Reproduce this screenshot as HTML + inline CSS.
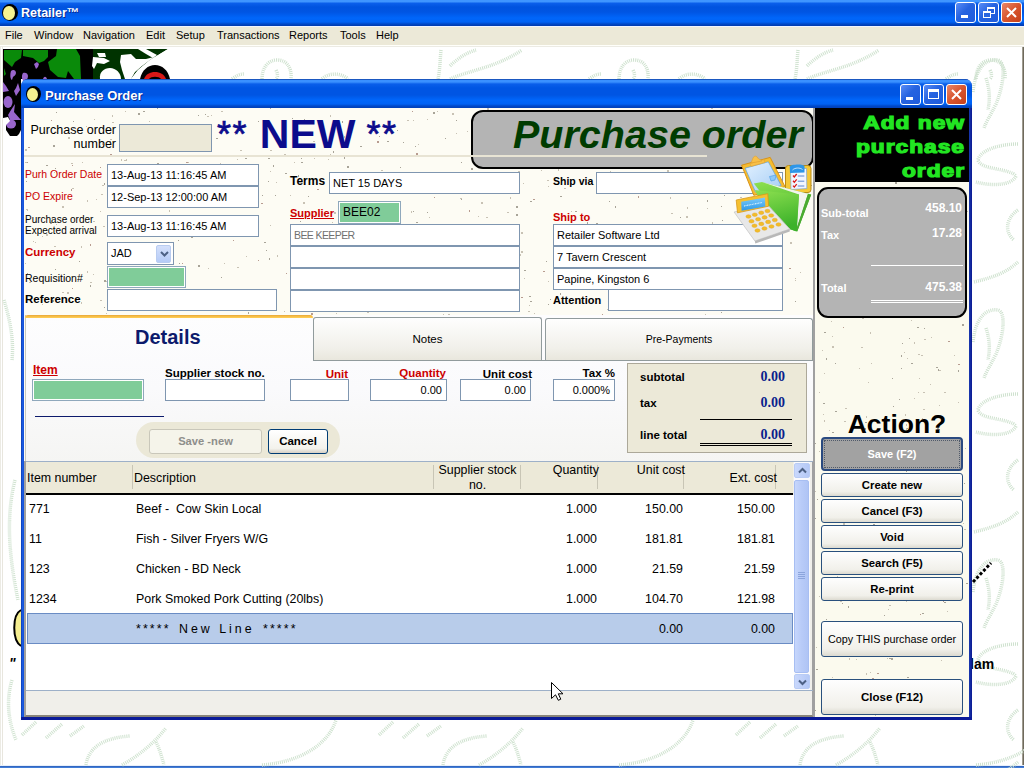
<!DOCTYPE html>
<html><head><meta charset="utf-8">
<style>
*{margin:0;padding:0;box-sizing:border-box}
html,body{width:1024px;height:768px;overflow:hidden;background:#fff}
body{position:relative;font-family:"Liberation Sans",sans-serif;font-size:12px;color:#000}
.a{position:absolute}
.tb{position:absolute;background:#fff;border:1px solid #7F96B0}
.lbl{position:absolute;white-space:nowrap;line-height:14px}
.b{font-weight:bold}
.red{color:#CC0000}
.xpbtn{position:absolute;width:21px;height:21px;border:1px solid #fff;border-radius:3px;background:linear-gradient(135deg,#5A8DF7 0%,#2663E0 45%,#1E5BDC 100%)}
.xpbtn.close{background:linear-gradient(135deg,#E8876A 0%,#D8552E 50%,#C5401A 100%)}
.abtn{position:absolute;left:821px;width:142px;border:1px solid #29507D;border-radius:3px;background:linear-gradient(#FEFEFE,#F1F0EA 80%,#DCDAD0);text-align:center;font-weight:bold;font-size:11.3px}
.row{position:absolute;left:27px;width:766px;height:30px}
.cell{position:absolute;top:8px;white-space:nowrap;line-height:14px}
.r{text-align:right}
</style></head><body>

<!-- Main window title -->
<div class="a" style="left:0;top:0;width:1024px;height:26px;background:linear-gradient(#3F95FF 0px,#3F95FF 1.5px,#0A5EEA 3.5px,#0053DF 7px,#0055E3 12px,#0066FA 18px,#0062F4 22px,#0048C8 24px,#003AAE 26px)"></div><div class="a" style="left:0;top:26px;width:1024px;height:1px;background:#F0F4FF"></div>
<div class="a" style="left:2px;top:4px;width:16px;height:17px;border-radius:50%;background:#000"></div><div class="a" style="left:3px;top:5.5px;width:11.5px;height:14px;border-radius:50%;background:#F5F290"></div>
<div class="lbl b" style="left:21px;top:5px;color:#fff;font-size:12.5px;line-height:16px;text-shadow:1px 1px 0 #0A2A90">Retailer™</div>
<div class="xpbtn" style="left:955px;top:2px"><div class="a" style="left:5px;top:12px;width:7px;height:3px;background:#fff"></div></div>
<div class="xpbtn" style="left:978px;top:2px"><div class="a" style="left:8px;top:4px;width:8px;height:7px;border:2px solid #fff;border-width:2px 1px 1px 1px"></div><div class="a" style="left:4px;top:8px;width:8px;height:7px;border:2px solid #fff;border-width:2px 1px 1px 1px;background:#2A66E0"></div></div>
<div class="xpbtn close" style="left:1001px;top:2px"><svg class="a" style="left:4px;top:4px" width="11" height="11"><path d="M1 1L10 10M10 1L1 10" stroke="#fff" stroke-width="2"/></svg></div>

<!-- Menu bar -->
<div class="a" style="left:0;top:27px;width:1024px;height:18px;background:#ECE9D8"></div>
<div class="a" style="left:0;top:45px;width:1024px;height:1px;background:#FFFFFA"></div><div class="a" style="left:0;top:46px;width:1024px;height:1px;background:#ECEBE4"></div>
<div class="lbl" style="left:5px;top:28px;font-size:11px">File</div>
<div class="lbl" style="left:34px;top:28px;font-size:11px">Window</div>
<div class="lbl" style="left:83px;top:28px;font-size:11px">Navigation</div>
<div class="lbl" style="left:146px;top:28px;font-size:11px">Edit</div>
<div class="lbl" style="left:176px;top:28px;font-size:11px">Setup</div>
<div class="lbl" style="left:217px;top:28px;font-size:11px">Transactions</div>
<div class="lbl" style="left:289px;top:28px;font-size:11px">Reports</div>
<div class="lbl" style="left:340px;top:28px;font-size:11px">Tools</div>
<div class="lbl" style="left:376px;top:28px;font-size:11px">Help</div>

<!-- MDI client border -->
<div class="a" style="left:0;top:46px;width:1px;height:720px;background:#ECEBE4"></div><div class="a" style="left:2px;top:47px;width:1px;height:720px;background:#E8E6DE"></div>
<div class="a" style="left:1022px;top:47px;width:1px;height:720px;background:#A09C90"></div><div class="a" style="left:1023px;top:47px;width:1px;height:720px;background:#6F6A5C"></div>
<div class="a" style="left:0;top:765px;width:1024px;height:1px;background:#E8F0FA"></div><div class="a" style="left:0;top:766px;width:1024px;height:2px;background:linear-gradient(#2A5CB8,#4A88E0)"></div>


<!-- ===== DESKTOP DECOR ===== -->
<svg class="a" style="left:0;top:48px" width="1024" height="720" viewBox="0 48 1024 720">
 <g fill="none" stroke="#CFE2CF" stroke-width="3.5" stroke-dasharray="1 1"><path d="M232 79 C236 76 240 74 244 74"/><path d="M262 79 C262 68 268 60 277 60 C287 60 292 68 291 79"/><path d="M276 70 C278 74 278 77 276 79"/><path d="M322 79 C328 73 340 72 348 79"/><path d="M441 50 C440 60 440 70 438 79"/><path d="M450 66 C458 58 468 52 476 50"/><path d="M450 79 C470 70 495 68 522 50"/><g transform="translate(357 0)"><path d="M232 79 C236 76 240 74 244 74"/><path d="M262 79 C262 68 268 60 277 60 C287 60 292 68 291 79"/><path d="M276 70 C278 74 278 77 276 79"/><path d="M322 79 C328 73 340 72 348 79"/><path d="M441 50 C440 60 440 70 438 79"/><path d="M450 66 C458 58 468 52 476 50"/><path d="M450 79 C470 70 495 68 522 50"/></g><g transform="translate(714 0)"><path d="M232 79 C236 76 240 74 244 74"/><path d="M262 79 C262 68 268 60 277 60 C287 60 292 68 291 79"/><path d="M276 70 C278 74 278 77 276 79"/><path d="M322 79 C328 73 340 72 348 79"/><path d="M441 50 C440 60 440 70 438 79"/><path d="M450 66 C458 58 468 52 476 50"/><path d="M450 79 C470 70 495 68 522 50"/></g><path d="M22 735 L36 722 M46 738 L62 724 M70 736 L84 726"/><path d="M86 765 C88 750 100 738 130 736"/><path d="M122 765 C140 755 155 742 166 728"/><path d="M156 742 C160 750 162 758 164 765"/><path d="M262 765 C300 762 328 745 336 720"/><g transform="translate(357 0)"><path d="M22 735 L36 722 M46 738 L62 724 M70 736 L84 726"/><path d="M86 765 C88 750 100 738 130 736"/><path d="M122 765 C140 755 155 742 166 728"/><path d="M156 742 C160 750 162 758 164 765"/><path d="M262 765 C300 762 328 745 336 720"/></g><g transform="translate(714 0)"><path d="M22 735 L36 722 M46 738 L62 724 M70 736 L84 726"/><path d="M86 765 C88 750 100 738 130 736"/><path d="M122 765 C140 755 155 742 166 728"/><path d="M156 742 C160 750 162 758 164 765"/><path d="M262 765 C300 762 328 745 336 720"/></g><path d="M973 92 C975 70 985 58 998 60 C1006 62 1004 85 996 104 C990 116 986 122 984 128"/><path d="M986 78 C990 90 990 100 988 110"/><path d="M1018 144 C1000 144 980 150 978 160 C980 170 1010 168 1016 176 C1012 186 990 186 976 182"/><path d="M1018 210 C1006 218 1004 232 1014 240"/><path d="M974 282 C990 278 1005 274 1018 262"/><g transform="translate(0 250)"><path d="M973 92 C975 70 985 58 998 60 C1006 62 1004 85 996 104 C990 116 986 122 984 128"/><path d="M986 78 C990 90 990 100 988 110"/><path d="M1018 144 C1000 144 980 150 978 160 C980 170 1010 168 1016 176 C1012 186 990 186 976 182"/><path d="M1018 210 C1006 218 1004 232 1014 240"/><path d="M974 282 C990 278 1005 274 1018 262"/></g><g transform="translate(0 500)"><path d="M973 92 C975 70 985 58 998 60 C1006 62 1004 85 996 104 C990 116 986 122 984 128"/><path d="M986 78 C990 90 990 100 988 110"/><path d="M1018 144 C1000 144 980 150 978 160 C980 170 1010 168 1016 176 C1012 186 990 186 976 182"/><path d="M1018 210 C1006 218 1004 232 1014 240"/><path d="M974 282 C990 278 1005 274 1018 262"/></g><path d="M15 480 C5 520 10 560 18 600"/><path d="M12 680 C6 700 8 720 16 740"/><path d="M4 300 C10 320 14 340 12 360"/></g>
 <!-- vine picture -->
 <rect x="3" y="49" width="91" height="30" fill="#000"/>
 <rect x="3" y="79" width="18" height="57" fill="#000"/>
 <path d="M4 50 H22 L21 58 L15 62 L12 67 L4 60 Z" fill="#0A8A0A"/>
 <path d="M23 50 H48 L48 57 L44 61 L39 63 L33 58 L23 56 Z" fill="#0A8A0A"/>
 <path d="M57 49 H76 L80 56 L81 79 H74 L68 71 L66 78 L58 77 L50 70 L48 62 L56 56 Z" fill="#0A8A0A"/>
 <path d="M4 68 L6 74 L4 76 Z" fill="#0A8A0A"/>
 <path d="M93 49 H168 L150 60 L138 70 L131 79 H93 Z" fill="#003300"/>
 <path d="M168 49 H170 V79 H131 L138 70 L150 60 Z" fill="#fff"/>
 <path d="M121 55 L131 54 L136 59 L146 59 L154 57 L142 66 L135 72 L131 79 L125 79 L122 70 L120 62 Z" fill="#fff"/>
 <path d="M138 49 L146 49 L157 55 L153 58 L146 54 Z" fill="#fff"/>
 <path d="M97 53 L105 53 L106 57 L99 57 Z" fill="#fff"/>
 <path d="M93 57 L104 58 L110 61 L104 64 L97 63 L94 69 L92 66 Z" fill="#fff"/>
 <path d="M100 79 C99 72 104 68 110 68 C116 68 121 73 121 79 Z" fill="#fff"/>
 <path d="M140 79 C142 70 148 65 155 65 C162 65 168 70 170 79 Z" fill="#000"/>
 <path d="M144 79 C146 74 150 72 155 72 C160 72 164 74 166 79 Z" fill="#D81818"/>
 <path d="M149 79 C151 76 159 76 161 79 Z" fill="#000"/>
 <path d="M34 64 l3-2 l2 2 l-1 3 l-2 2 z" fill="#9966CC"/>
 <path d="M11 71 c2-2 5-1 5 2 c0 2-2 3-3 4 l-1 3 c-2-1-2-6-1-9z" fill="#9966CC"/>
 <path d="M23 73 c2-1 5 0 5 3 c0 3-2 5-4 6 c-2-2-3-6-1-9z" fill="#9966CC"/>
 <path d="M43 79 c1-3 3-3 4 0 z" fill="#9966CC"/>
 <path d="M3 82 L6 86 L9 91 L3 92 Z" fill="#9966CC"/>
 <path d="M18 83 L20 90 L16 96 L14 91 L16 88 Z" fill="#9966CC"/>
 <ellipse cx="8" cy="102" rx="4.5" ry="6" fill="#9966CC"/>
 <path d="M15 104 L14 112 L21 120 L10 120 L8 115 L11 110 Z" fill="#9966CC"/>
 <ellipse cx="11" cy="124" rx="5" ry="4.5" fill="#9966CC"/>
 <path d="M3 118 L8 117 L10 121 L6 125 L6 130 L10 136 L3 136 Z" fill="#fff"/>
 <path d="M19 134 L21 130 L21 136 L17 136 Z" fill="#fff"/>
 <!-- left bottom -->
 <path d="M21 610 C12 615 12 640 21 646" fill="#F5EE90" stroke="#000" stroke-width="2"/>
 <text x="9" y="668" font-family="Liberation Sans" font-style="italic" font-size="14" font-weight="bold">"</text>
 <!-- right -->
 <path d="M973 582 L991 563" stroke="#000" stroke-width="3" stroke-dasharray="3 2"/>
 <text x="970" y="669" font-family="Liberation Sans" font-weight="bold" font-size="14">lam</text>
</svg>



<!-- PO window frame -->
<div class="a" style="left:21px;top:79px;width:951px;height:641px;border-radius:7px 7px 0 0;background:#0A3AB8"></div>
<div class="a" style="left:21px;top:100px;width:3px;height:620px;background:linear-gradient(90deg,#0A3AB0,#1A5AE0 50%,#1550D8)"></div>
<div class="a" style="left:969px;top:100px;width:3px;height:620px;background:linear-gradient(90deg,#1A3AB0,#0A1890)"></div>
<div class="a" style="left:21px;top:717px;width:951px;height:3px;background:#0A1A98"></div>
<div class="a" style="left:21px;top:79px;width:951px;height:29px;border-radius:7px 7px 0 0;background:linear-gradient(#0A3AA0 0px,#3A90FF 1.5px,#3A90FF 3px,#0A5EEA 5px,#0055E3 9px,#0055E3 16px,#0066FA 21px,#0062F4 25px,#0048C8 27px,#0040B8 29px)"></div>
<div class="a" style="left:25.5px;top:86px;width:15px;height:16px;border-radius:50%;background:#000"></div><div class="a" style="left:26.5px;top:87.5px;width:11px;height:13px;border-radius:50%;background:#F5F290"></div>
<div class="lbl b" style="left:45px;top:88px;color:#fff;font-size:13px;line-height:15px;text-shadow:1px 1px 0 #0A2A90">Purchase Order</div>
<div class="xpbtn" style="left:900px;top:84px"><div class="a" style="left:5px;top:12px;width:7px;height:3px;background:#fff"></div></div>
<div class="xpbtn" style="left:923px;top:84px"><div class="a" style="left:4px;top:4px;width:11px;height:10px;border:1px solid #fff;border-top-width:3px"></div></div>
<div class="xpbtn close" style="left:946px;top:84px"><svg class="a" style="left:4px;top:4px" width="11" height="11"><path d="M1 1L10 10M10 1L1 10" stroke="#fff" stroke-width="2"/></svg></div>

<!-- client area -->
<div class="a" style="left:24px;top:108px;width:945px;height:609px;background:#FDFCF4"></div>
<div class="a" style="left:815px;top:182px;width:154px;height:535px;background:#FBFAEE"></div>
<!--SPECK--><svg class="a" style="left:0;top:0" width="1024" height="768"><path fill="#A8A498" d="M446 183h2v1h-2zM53 197h1v1h-1zM358 279h1v1h-1zM137 132h1v2h-1zM456 120h1v1h-1zM560 196h2v1h-2zM353 264h1v1h-1zM398 245h2v1h-2zM328 246h1v1h-1zM156 132h1v2h-1zM670 286h1v1h-1zM163 156h1v1h-1zM488 162h1v1h-1zM333 190h2v1h-2zM73 121h1v1h-1zM292 118h1v1h-1zM104 183h1v2h-1zM508 138h1v1h-1zM391 208h1v1h-1zM705 252h1v1h-1zM46 165h2v1h-2zM777 183h1v1h-1zM615 206h1v2h-1zM300 221h1v1h-1zM222 168h2v1h-2zM228 194h2v2h-2zM27 273h1v1h-1zM596 223h2v1h-2zM462 270h2v1h-2zM119 199h1v1h-1zM720 308h2v2h-2zM461 199h1v1h-1zM516 214h2v2h-2zM646 309h1v1h-1zM55 269h1v1h-1zM90 285h1v2h-1zM110 141h1v1h-1zM343 179h1v1h-1zM79 261h1v1h-1zM246 158h1v1h-1zM148 200h2v2h-2zM791 221h2v2h-2zM268 181h1v1h-1zM398 212h2v1h-2zM27 162h1v1h-1zM56 112h1v1h-1zM603 276h2v1h-2zM205 114h1v1h-1zM531 124h1v1h-1zM795 301h1v1h-1zM189 303h2v1h-2zM135 179h1v2h-1zM308 196h1v1h-1zM104 280h2v2h-2zM617 241h1v1h-1zM156 141h2v2h-2zM379 136h1v1h-1zM293 126h1v1h-1zM384 222h1v2h-1zM721 206h1v1h-1zM781 253h1v1h-1zM550 299h1v1h-1zM198 265h2v2h-2zM415 146h1v1h-1zM548 304h1v1h-1zM192 309h1v1h-1zM157 108h1v1h-1zM779 235h2v1h-2zM273 165h1v2h-1zM179 263h1v1h-1zM50 222h2v2h-2zM721 312h1v1h-1zM606 149h1v1h-1zM55 168h1v1h-1zM707 200h1v2h-1zM195 184h1v1h-1zM528 126h2v1h-2zM347 166h2v2h-2zM598 150h2v2h-2zM387 141h2v1h-2zM529 296h2v1h-2zM316 212h1v1h-1zM435 299h1v1h-1zM658 308h1v1h-1zM397 130h1v1h-1zM601 276h2v2h-2zM646 300h1v1h-1zM53 145h2v2h-2zM560 293h1v2h-1zM270 108h1v1h-1zM26 181h1v1h-1zM516 206h2v2h-2zM216 138h2v1h-2zM220 295h2v1h-2zM344 157h1v2h-1zM665 144h1v1h-1zM609 201h1v1h-1zM718 111h1v1h-1zM718 176h2v2h-2zM191 236h2v2h-2zM138 113h2v2h-2zM296 137h1v1h-1zM670 292h1v2h-1zM745 303h1v1h-1zM275 195h1v1h-1zM229 303h1v1h-1zM575 211h2v1h-2zM323 290h1v1h-1zM298 175h1v2h-1zM546 261h1v1h-1zM634 227h1v1h-1zM722 157h1v1h-1zM578 282h1v1h-1zM104 307h1v1h-1zM178 240h1v1h-1zM530 201h2v1h-2zM410 309h2v1h-2zM347 304h2v1h-2zM333 265h2v2h-2zM304 119h1v1h-1zM301 162h2v1h-2zM765 217h1v2h-1zM333 151h1v2h-1zM360 146h2v1h-2zM245 158h1v1h-1zM756 284h1v2h-1zM738 270h1v2h-1zM523 111h2v2h-2zM541 159h1v1h-1zM737 271h1v2h-1zM645 281h2v1h-2zM461 162h1v1h-1zM438 267h1v1h-1zM285 173h2v1h-2zM524 270h2v1h-2zM722 220h1v1h-1zM625 128h1v1h-1zM262 195h1v1h-1zM530 301h2v1h-2zM748 200h1v1h-1zM143 111h2v1h-2zM119 308h1v2h-1zM602 146h1v2h-1zM269 258h1v2h-1zM370 248h1v2h-1zM471 168h2v2h-2zM578 279h2v1h-2zM667 291h1v2h-1zM400 229h1v1h-1zM341 215h1v1h-1zM810 185h2v1h-2zM433 112h2v2h-2zM670 307h1v1h-1zM182 145h1v1h-1zM118 306h2v1h-2zM198 115h1v1h-1zM107 175h1v1h-1zM403 142h1v1h-1zM52 300h2v2h-2zM707 291h1v1h-1zM519 137h1v1h-1zM587 222h1v2h-1zM234 193h1v1h-1zM686 177h1v1h-1zM274 294h2v2h-2zM400 167h1v1h-1zM660 178h1v1h-1zM680 217h1v1h-1zM664 228h1v1h-1zM712 163h1v2h-1zM787 154h1v1h-1zM221 277h1v1h-1zM575 148h2v1h-2zM710 256h1v1h-1zM413 211h1v1h-1zM636 178h1v1h-1zM667 283h2v1h-2zM779 301h1v1h-1zM365 212h1v1h-1zM264 242h2v1h-2zM778 214h1v1h-1zM445 138h1v1h-1zM255 192h1v1h-1zM473 242h2v1h-2zM268 158h2v1h-2zM326 229h1v1h-1zM248 312h1v2h-1zM169 170h2v1h-2zM360 296h1v1h-1zM442 276h1v1h-1zM724 195h1v1h-1zM427 212h1v1h-1zM266 250h1v1h-1zM416 222h2v1h-2zM507 274h1v1h-1zM157 163h2v2h-2zM370 236h1v1h-1zM758 284h1v2h-1zM414 304h1v1h-1zM590 153h1v2h-1zM406 272h1v1h-1zM342 121h1v2h-1zM301 158h1v1h-1zM146 254h1v1h-1zM321 306h2v2h-2zM163 284h2v1h-2zM258 121h1v1h-1zM123 256h1v1h-1zM128 165h2v1h-2zM520 145h2v2h-2zM603 255h1v1h-1zM151 149h1v1h-1zM682 268h1v1h-1zM697 233h1v1h-1zM111 271h2v2h-2zM613 279h1v1h-1zM922 613h2v1h-2zM958 370h1v2h-1zM898 588h2v1h-2zM824 332h2v1h-2zM883 242h1v1h-1zM870 271h1v1h-1zM966 583h2v1h-2zM964 483h1v1h-1zM914 316h1v1h-1zM890 449h1v1h-1zM882 700h1v1h-1zM953 269h1v1h-1zM901 368h1v1h-1zM832 643h1v1h-1zM849 488h2v1h-2zM933 212h1v1h-1zM817 499h1v1h-1zM919 623h1v1h-1zM832 193h1v2h-1zM843 478h2v1h-2zM937 200h1v2h-1zM826 358h1v2h-1zM905 205h1v1h-1zM885 709h1v1h-1zM917 327h2v1h-2zM958 546h1v2h-1zM899 399h1v1h-1zM902 343h1v1h-1zM854 194h1v1h-1zM956 295h2v1h-2zM823 403h2v1h-2zM865 231h1v1h-1zM895 685h1v1h-1zM819 253h2v1h-2zM937 428h2v2h-2zM831 574h2v1h-2zM876 644h2v1h-2zM849 316h1v1h-1zM860 713h2v1h-2zM929 622h1v1h-1zM889 658h2v1h-2zM860 195h2v2h-2zM816 669h2v1h-2zM964 199h1v2h-1zM880 238h2v2h-2zM863 652h1v1h-1zM835 411h2v1h-2zM856 276h1v1h-1zM907 677h2v1h-2zM872 310h1v1h-1zM863 701h2v1h-2zM849 509h2v2h-2zM838 316h1v1h-1zM845 487h1v1h-1zM924 328h1v1h-1zM871 538h1v1h-1zM952 587h2v1h-2zM932 593h1v1h-1zM826 619h1v1h-1zM930 483h2v1h-2zM923 440h2v1h-2zM815 710h1v1h-1zM893 406h1v1h-1zM901 355h1v2h-1zM918 543h1v1h-1zM878 534h2v2h-2zM919 264h2v1h-2zM821 629h1v1h-1zM873 524h2v1h-2zM906 471h1v1h-1zM865 422h2v1h-2zM842 603h1v1h-1zM906 428h2v1h-2zM829 528h2v1h-2zM840 685h1v2h-1zM948 438h1v1h-1zM832 432h2v1h-2zM892 378h1v1h-1zM846 250h1v2h-1zM891 658h2v2h-2zM850 583h1v1h-1zM867 257h1v1h-1zM929 522h2v1h-2zM944 602h2v1h-2zM853 630h1v1h-1zM815 443h1v1h-1zM909 338h1v1h-1zM833 547h1v2h-1zM895 182h2v2h-2zM884 615h1v1h-1zM870 704h1v2h-1zM936 367h2v1h-2zM862 210h1v1h-1zM962 696h1v1h-1zM959 287h1v1h-1zM962 324h2v2h-2zM855 312h2v1h-2zM938 369h1v2h-1zM835 363h1v1h-1zM876 488h1v2h-1zM935 630h2v1h-2zM856 295h1v1h-1zM815 518h1v1h-1zM821 624h1v1h-1zM911 363h2v1h-2zM848 606h1v2h-1zM938 469h1v2h-1z"/><path fill="#C8C2B4" d="M279 139h1v1h-1zM519 304h1v1h-1zM794 117h1v1h-1zM166 228h1v1h-1zM381 170h2v1h-2zM216 226h1v2h-1zM54 246h2v1h-2zM714 172h2v1h-2zM481 202h2v2h-2zM534 313h1v1h-1zM126 159h1v2h-1zM87 200h1v2h-1zM430 235h1v1h-1zM733 269h1v2h-1zM311 133h2v2h-2zM294 162h1v1h-1zM42 304h1v1h-1zM452 113h2v2h-2zM155 267h1v2h-1zM284 154h2v2h-2zM696 274h2v1h-2zM202 215h1v1h-1zM179 150h2v2h-2zM687 207h1v2h-1zM340 303h1v1h-1zM790 242h2v2h-2zM366 288h1v1h-1zM303 202h2v2h-2zM355 297h2v1h-2zM437 111h1v1h-1zM220 165h2v1h-2zM507 212h2v1h-2zM380 218h2v2h-2zM465 303h1v1h-1zM81 246h1v2h-1zM145 256h1v1h-1zM151 197h1v1h-1zM178 173h1v1h-1zM357 296h1v1h-1zM141 298h2v1h-2zM94 119h1v1h-1zM81 302h1v2h-1zM382 178h2v2h-2zM235 134h1v1h-1zM270 171h1v1h-1zM418 144h1v1h-1zM221 111h2v1h-2zM670 197h1v2h-1zM334 212h2v2h-2zM294 280h2v1h-2zM90 282h2v1h-2zM486 217h2v1h-2zM588 289h1v1h-1zM800 138h2v1h-2zM421 280h1v2h-1zM484 292h2v1h-2zM106 281h2v1h-2zM518 248h1v1h-1zM653 262h2v1h-2zM544 121h1v1h-1zM82 162h1v1h-1zM607 309h1v1h-1zM401 249h2v1h-2zM610 171h1v1h-1zM71 163h2v1h-2zM557 168h1v1h-1zM670 308h1v1h-1zM671 213h2v1h-2zM206 293h1v1h-1zM26 209h1v1h-1zM25 263h1v1h-1zM220 163h1v1h-1zM318 305h1v2h-1zM591 118h1v1h-1zM755 134h1v1h-1zM541 170h1v1h-1zM473 291h1v1h-1zM350 216h1v1h-1zM421 238h1v1h-1zM237 159h1v1h-1zM776 283h1v1h-1zM487 108h2v2h-2zM110 139h2v1h-2zM766 257h1v2h-1zM207 298h1v1h-1zM124 160h2v1h-2zM112 122h2v1h-2zM330 154h1v1h-1zM417 247h1v1h-1zM290 195h1v1h-1zM652 260h1v1h-1zM789 172h1v1h-1zM170 301h1v1h-1zM548 186h1v1h-1zM305 278h1v1h-1zM62 206h2v2h-2zM348 276h1v1h-1zM613 294h1v1h-1zM328 159h1v1h-1zM756 145h2v1h-2zM673 267h1v1h-1zM276 182h1v1h-1zM100 211h1v1h-1zM208 194h2v1h-2zM614 283h1v1h-1zM687 168h1v1h-1zM144 291h1v1h-1zM336 313h1v1h-1zM398 277h2v2h-2zM770 129h2v1h-2zM225 232h1v1h-1zM32 175h1v1h-1zM270 150h2v1h-2zM73 128h2v1h-2zM270 225h1v1h-1zM705 314h1v1h-1zM358 277h1v2h-1zM768 309h1v1h-1zM674 141h1v1h-1zM343 283h1v1h-1zM196 190h1v1h-1zM121 159h1v2h-1zM56 224h1v1h-1zM685 132h2v1h-2zM518 171h2v1h-2zM359 244h1v1h-1zM42 236h1v1h-1zM626 269h1v1h-1zM96 199h1v1h-1zM526 125h1v2h-1zM427 119h1v1h-1zM774 136h2v2h-2zM667 137h2v2h-2zM188 162h1v1h-1zM114 217h1v1h-1zM712 222h1v2h-1zM106 313h1v1h-1zM308 266h1v1h-1zM610 117h1v1h-1zM528 311h2v1h-2zM510 197h1v2h-1zM128 155h1v1h-1zM200 228h1v1h-1zM711 269h1v1h-1zM33 241h1v1h-1zM181 233h2v1h-2zM62 292h2v1h-2zM29 282h1v1h-1zM207 116h2v1h-2zM572 282h1v1h-1zM460 198h2v1h-2zM610 303h1v1h-1zM521 251h2v2h-2zM394 281h1v2h-1zM368 257h1v1h-1zM570 239h2v1h-2zM75 230h1v2h-1zM112 115h1v2h-1zM524 278h1v1h-1zM102 128h1v1h-1zM246 256h1v1h-1zM784 212h2v1h-2zM48 193h1v2h-1zM297 253h1v1h-1zM704 126h1v1h-1zM25 149h2v2h-2zM27 209h1v2h-1zM169 210h1v2h-1zM87 271h1v2h-1zM519 181h1v1h-1zM726 125h1v1h-1zM443 264h2v1h-2zM219 175h1v1h-1zM800 272h1v1h-1zM330 115h1v2h-1zM571 211h1v1h-1zM135 232h2v1h-2zM740 197h2v1h-2zM356 155h1v2h-1zM634 252h2v1h-2zM101 194h2v1h-2zM520 159h1v1h-1zM514 192h2v2h-2zM168 243h1v1h-1zM103 226h2v1h-2zM428 240h2v1h-2zM34 194h2v1h-2zM662 239h2v1h-2zM202 307h2v1h-2zM669 276h1v1h-1zM456 133h1v1h-1zM695 163h1v1h-1zM362 239h1v1h-1zM208 268h1v1h-1zM504 269h1v2h-1zM442 261h1v2h-1zM413 120h1v1h-1zM411 211h1v2h-1zM29 282h2v1h-2zM548 281h1v1h-1zM781 123h2v1h-2zM46 234h2v2h-2zM284 311h1v1h-1zM732 115h2v1h-2zM291 286h1v1h-1zM357 222h1v1h-1zM677 191h1v1h-1zM423 309h1v2h-1zM510 237h2v1h-2zM561 151h1v1h-1zM635 297h1v1h-1zM673 270h1v1h-1zM55 132h2v1h-2zM349 129h1v1h-1zM125 111h1v1h-1zM586 285h1v1h-1zM519 254h2v2h-2zM224 307h1v1h-1zM35 242h1v1h-1zM407 120h2v1h-2zM310 241h1v1h-1zM795 280h1v1h-1zM362 291h2v1h-2zM498 293h1v1h-1zM25 162h2v1h-2zM664 287h1v1h-1zM695 275h2v2h-2zM297 125h1v2h-1zM502 248h1v1h-1zM224 263h1v1h-1zM93 274h1v1h-1zM481 293h2v1h-2zM166 253h2v1h-2zM645 140h1v1h-1zM707 208h1v1h-1zM463 288h2v2h-2zM741 121h1v1h-1zM529 305h1v1h-1zM736 295h1v1h-1zM644 254h2v2h-2zM68 137h2v2h-2zM558 169h1v2h-1zM558 110h1v1h-1zM100 300h2v1h-2zM380 178h1v1h-1zM68 293h1v1h-1zM743 153h1v1h-1zM166 267h1v1h-1zM86 126h1v1h-1zM240 150h2v1h-2zM602 192h1v1h-1zM663 177h1v2h-1zM313 141h2v1h-2zM27 215h2v1h-2zM119 255h1v2h-1zM277 255h1v2h-1zM429 217h1v1h-1zM478 216h1v1h-1zM344 136h1v2h-1zM140 226h1v1h-1zM675 302h1v1h-1zM686 216h2v2h-2zM367 311h2v2h-2zM523 183h1v1h-1zM662 291h1v1h-1zM530 163h1v1h-1zM451 299h1v1h-1zM93 221h2v1h-2zM387 221h1v1h-1zM704 157h1v1h-1zM149 121h1v1h-1zM72 188h2v1h-2zM145 177h2v1h-2zM510 283h2v1h-2zM606 261h1v1h-1zM711 108h2v1h-2zM416 307h1v1h-1zM642 288h1v1h-1zM380 202h1v1h-1zM332 222h1v1h-1zM645 283h1v1h-1zM448 314h2v1h-2zM564 188h2v1h-2zM301 304h2v1h-2zM102 185h2v1h-2zM795 278h1v1h-1zM729 250h2v2h-2zM521 232h2v2h-2zM526 116h1v2h-1zM688 229h1v1h-1zM443 314h1v1h-1zM119 140h1v1h-1zM102 143h1v2h-1zM631 174h1v1h-1zM483 180h1v1h-1zM67 292h2v2h-2zM667 170h2v2h-2zM467 131h1v1h-1zM211 115h1v1h-1zM682 134h1v2h-1zM659 140h2v1h-2zM422 155h1v1h-1zM314 158h1v1h-1zM712 133h2v1h-2zM237 267h2v1h-2zM471 172h1v1h-1zM109 224h2v1h-2zM741 268h1v2h-1zM547 180h2v1h-2zM575 159h1v1h-1zM54 172h1v1h-1zM686 226h1v1h-1zM367 249h1v1h-1zM615 125h1v1h-1zM606 279h1v1h-1zM66 252h2v1h-2zM756 134h1v1h-1zM963 523h1v1h-1zM824 373h1v1h-1zM862 255h2v1h-2zM851 311h1v1h-1zM836 483h1v2h-1zM906 428h1v2h-1zM832 336h1v1h-1zM881 283h1v1h-1zM955 526h2v2h-2zM819 596h1v1h-1zM843 523h2v2h-2zM840 601h2v1h-2zM864 280h1v1h-1zM871 476h1v2h-1zM851 204h2v1h-2zM903 224h1v1h-1zM882 284h1v1h-1zM943 639h1v1h-1zM858 535h1v1h-1zM866 416h1v2h-1zM939 214h2v1h-2zM914 342h1v2h-1zM819 283h1v1h-1zM828 535h2v1h-2zM878 465h1v1h-1zM896 316h2v1h-2zM905 224h1v1h-1zM882 643h2v1h-2zM830 626h1v1h-1zM961 483h1v1h-1zM923 409h2v1h-2zM840 580h1v2h-1zM927 689h1v1h-1zM907 235h1v2h-1zM832 677h1v1h-1zM844 421h2v1h-2zM873 259h2v1h-2zM867 262h1v2h-1zM918 392h1v1h-1zM944 392h2v1h-2zM886 490h1v1h-1zM815 491h1v1h-1zM855 486h2v2h-2zM966 200h1v2h-1zM948 596h2v1h-2zM870 332h1v2h-1zM928 454h1v1h-1zM864 710h1v1h-1zM852 307h1v1h-1zM816 647h1v1h-1zM861 347h2v1h-2zM827 277h2v2h-2zM869 596h1v2h-1zM922 298h1v1h-1zM907 644h1v1h-1zM927 697h1v1h-1zM938 650h1v1h-1zM843 469h2v1h-2zM914 398h1v1h-1zM866 446h1v1h-1zM966 211h2v1h-2zM932 230h1v1h-1zM897 496h2v1h-2zM907 358h1v1h-1zM923 590h1v1h-1zM933 704h1v1h-1zM887 532h1v1h-1zM966 304h1v1h-1zM837 276h2v2h-2zM839 197h1v1h-1zM965 448h1v1h-1zM850 290h2v1h-2zM838 643h1v1h-1zM906 424h1v2h-1zM847 654h1v2h-1zM947 279h2v2h-2zM829 272h1v1h-1zM866 673h1v2h-1zM920 202h1v1h-1zM837 576h1v1h-1zM847 699h2v1h-2zM821 454h2v1h-2zM870 187h2v1h-2zM898 475h2v2h-2zM948 566h1v1h-1zM879 702h1v1h-1zM921 355h2v1h-2zM945 454h2v2h-2zM850 518h1v1h-1zM923 392h2v1h-2zM918 354h2v1h-2zM887 568h1v1h-1zM895 464h1v1h-1zM841 621h2v1h-2zM941 660h1v1h-1zM873 627h1v1h-1zM937 460h1v1h-1zM875 715h1v1h-1zM888 609h1v1h-1zM919 378h1v1h-1zM871 363h1v1h-1zM942 230h1v2h-1zM845 408h2v1h-2zM871 205h1v1h-1zM924 339h2v1h-2zM939 370h2v1h-2zM930 384h1v1h-1zM885 429h1v1h-1zM887 658h1v1h-1zM893 623h2v1h-2zM876 203h2v1h-2zM948 259h2v1h-2zM862 318h2v1h-2zM947 611h1v1h-1zM845 209h1v1h-1zM886 443h1v1h-1zM822 350h1v1h-1zM859 562h2v1h-2zM884 682h1v2h-1zM823 414h1v1h-1zM946 220h1v1h-1zM956 482h1v1h-1zM830 232h2v2h-2zM904 352h1v1h-1zM954 355h1v1h-1zM937 706h1v1h-1zM829 430h1v1h-1zM918 243h1v1h-1zM859 368h1v1h-1zM957 231h1v2h-1zM856 659h1v1h-1zM956 199h2v2h-2zM867 687h1v1h-1zM900 233h1v2h-1zM868 382h1v1h-1zM949 244h2v1h-2zM889 605h2v1h-2zM819 392h1v1h-1zM951 227h1v1h-1zM906 601h1v1h-1zM909 552h1v1h-1zM958 402h1v1h-1zM852 574h1v1h-1zM888 448h2v2h-2zM929 254h2v2h-2zM953 580h1v2h-1zM905 414h1v2h-1zM885 308h2v2h-2zM919 562h1v2h-1zM877 228h1v2h-1zM866 500h1v2h-1zM939 405h1v1h-1zM866 296h1v2h-1zM922 418h1v2h-1zM849 658h1v2h-1zM966 283h1v1h-1zM830 477h2v1h-2zM826 515h2v2h-2zM870 535h1v1h-1zM919 480h1v2h-1zM951 571h1v1h-1zM837 496h1v1h-1zM875 581h1v1h-1zM931 337h1v1h-1zM964 529h2v1h-2zM873 697h2v1h-2zM857 268h1v2h-1zM949 268h1v1h-1zM831 321h1v1h-1zM883 629h1v2h-1zM863 263h1v1h-1zM900 540h1v1h-1zM870 672h1v1h-1zM911 320h1v1h-1zM941 485h2v2h-2zM930 544h1v2h-1zM832 346h2v2h-2zM911 552h1v1h-1zM958 579h1v1h-1zM896 460h2v2h-2zM891 637h2v1h-2zM928 621h1v2h-1zM835 558h2v1h-2zM857 218h1v2h-1zM918 703h1v1h-1zM922 220h1v1h-1zM824 420h1v2h-1zM819 451h1v1h-1z"/><path fill="#B89C90" d="M599 167h1v1h-1zM307 291h1v1h-1zM315 225h2v1h-2zM778 200h2v2h-2zM90 244h1v2h-1zM286 273h1v1h-1zM124 139h1v2h-1zM139 279h2v1h-2zM467 265h1v1h-1zM575 289h1v1h-1zM338 208h1v2h-1zM173 206h1v1h-1zM58 280h2v1h-2zM391 132h1v1h-1zM135 216h1v1h-1zM754 255h1v1h-1zM317 189h2v1h-2zM521 297h2v1h-2zM258 260h1v1h-1zM416 153h2v2h-2zM72 165h1v1h-1zM49 254h1v1h-1zM675 285h1v1h-1zM261 203h2v1h-2zM71 189h1v2h-1zM602 314h1v1h-1zM777 133h1v1h-1zM176 183h1v1h-1zM51 120h1v1h-1zM747 239h1v1h-1zM208 206h2v2h-2zM661 243h1v1h-1zM791 228h1v1h-1zM754 188h2v1h-2zM412 306h1v1h-1zM620 140h1v1h-1zM653 162h2v1h-2zM533 199h2v1h-2zM33 222h1v1h-1zM233 240h1v1h-1zM186 162h2v1h-2zM282 147h2v1h-2zM150 269h2v1h-2zM28 147h2v1h-2zM543 271h2v1h-2zM491 302h1v1h-1zM328 270h1v2h-1zM182 263h1v1h-1zM638 196h1v2h-1zM377 141h2v2h-2zM311 313h2v2h-2zM100 167h1v1h-1zM597 168h1v1h-1zM412 111h1v1h-1zM72 288h1v1h-1zM789 268h2v1h-2zM434 197h1v1h-1zM110 154h2v1h-2zM643 254h1v1h-1zM482 126h1v1h-1zM689 281h1v1h-1zM469 210h1v2h-1zM476 290h1v1h-1zM371 237h1v1h-1zM306 146h1v1h-1zM581 161h2v1h-2zM770 195h2v1h-2zM940 559h2v2h-2zM864 428h2v2h-2zM947 703h2v1h-2zM860 487h1v1h-1zM832 278h2v1h-2zM930 243h2v1h-2zM948 483h1v2h-1zM920 614h1v1h-1zM958 364h2v1h-2zM825 441h1v1h-1zM885 189h2v1h-2zM899 279h1v1h-1zM877 673h2v1h-2zM869 447h1v1h-1zM877 258h1v1h-1zM943 601h1v1h-1zM848 258h2v1h-2zM956 284h2v1h-2zM878 494h1v2h-1zM937 289h2v1h-2zM943 259h1v1h-1zM956 714h2v1h-2zM852 502h1v1h-1zM939 429h1v1h-1zM865 704h1v2h-1zM868 268h2v1h-2zM948 341h2v1h-2zM959 243h1v2h-1zM936 547h1v2h-1zM843 327h1v1h-1zM875 449h2v1h-2zM872 678h2v1h-2zM894 543h1v1h-1zM864 255h1v2h-1zM930 449h1v2h-1z"/></svg><!--/SPECK-->


<!-- ===== TOP FORM ===== -->
<div class="lbl" style="left:28px;top:123px;width:88px;text-align:right;font-size:12.5px;line-height:14px">Purchase order<br>number</div>
<div class="tb" style="left:119px;top:124px;width:93px;height:28px;background:#ECE9D8"></div>
<div class="lbl" style="left:217px;top:112px;font-size:36px;line-height:46px;color:#0C0C8C;-webkit-text-stroke:0.7px #0C0C8C;letter-spacing:1.5px">**</div><div class="lbl b" style="left:259.8px;top:110.5px;font-size:41px;line-height:46px;color:#0C0C8C">NEW</div><div class="lbl" style="left:366.6px;top:112px;font-size:36px;line-height:46px;color:#0C0C8C;-webkit-text-stroke:0.7px #0C0C8C;letter-spacing:1.5px">**</div>
<!-- Purchase order header box -->
<div class="a" style="left:471px;top:110px;width:343px;height:59px;border:2px solid #000;border-radius:12px;background:#B4B4B4"></div>
<div class="lbl" style="left:513px;top:112px;font-size:39.5px;line-height:44px;font-weight:bold;font-style:italic;color:#003C00">Purchase order</div>
<!-- separator -->
<div class="a" style="left:24px;top:155px;width:683px;height:2px;background:#E8E4D4"></div>

<div class="lbl red" style="left:25px;top:167px;font-size:10.5px">Purh Order Date</div>
<div class="tb" style="left:107px;top:164px;width:152px;height:22px"></div>
<div class="lbl" style="left:111px;top:168px;font-size:11px">13-Aug-13 11:16:45 AM</div>
<div class="lbl red" style="left:25px;top:189px;font-size:10.5px">PO Expire</div>
<div class="tb" style="left:107px;top:186px;width:152px;height:22px"></div>
<div class="lbl" style="left:111px;top:190px;font-size:11px">12-Sep-13 12:00:00 AM</div>
<div class="lbl" style="left:25px;top:214px;font-size:10px;line-height:11px">Purchase order<br>Expected arrival</div>
<div class="tb" style="left:107px;top:215px;width:152px;height:22px"></div>
<div class="lbl" style="left:111px;top:219px;font-size:11px">13-Aug-13 11:16:45 AM</div>
<div class="lbl b red" style="left:25px;top:245px;font-size:11.5px">Currency</div>
<div class="tb" style="left:107px;top:242px;width:67px;height:23px"></div>
<div class="lbl" style="left:111px;top:246px;font-size:11px">JAD</div>
<div class="a" style="left:156px;top:245px;width:15px;height:18px;border:1px solid #B9CCF0;border-radius:2px;background:linear-gradient(#D4E0FB,#B5CBF7)"><svg class="a" style="left:3px;top:5px" width="9" height="7"><path d="M1 1L4.5 4.5L8 1" stroke="#4D6185" stroke-width="2" fill="none"/></svg></div>
<div class="lbl" style="left:25px;top:271px;font-size:10.5px">Requisition#</div>
<div class="tb" style="left:107px;top:266px;width:79px;height:22px;background:#80CC99;border:1px solid #8FA8BC;box-shadow:inset 0 0 0 1px #fff"></div>
<div class="lbl b" style="left:25px;top:292px;font-size:11.5px">Reference</div>
<div class="tb" style="left:107px;top:289px;width:170px;height:22px"></div>

<div class="lbl b" style="left:290px;top:174px;font-size:12px">Terms</div>
<div class="tb" style="left:329px;top:172px;width:191px;height:22px"></div>
<div class="lbl" style="left:333px;top:176px;font-size:11px">NET 15 DAYS</div>
<div class="lbl b red" style="left:290px;top:206px;font-size:11px;text-decoration:underline">Supplier</div>
<div class="tb" style="left:338px;top:201px;width:63px;height:23px;background:#80CC99;border:1px solid #8FA8BC;box-shadow:inset 0 0 0 1px #fff"></div>
<div class="lbl" style="left:343px;top:205px;font-size:12px">BEE02</div>
<div class="tb" style="left:290px;top:224px;width:230px;height:22px;border-width:1px 1px 1px 1px"></div>
<div class="lbl" style="left:294px;top:228px;font-size:10.5px;letter-spacing:-0.6px;color:#707070">BEE KEEPER</div>
<div class="tb" style="left:290px;top:246px;width:230px;height:22px;border-width:1px 1px 1px 1px"></div>
<div class="tb" style="left:290px;top:268px;width:230px;height:22px;border-width:1px 1px 1px 1px"></div>
<div class="tb" style="left:290px;top:290px;width:230px;height:22px"></div>

<div class="lbl b" style="left:553px;top:174px;font-size:10.5px">Ship via</div>
<div class="tb" style="left:596px;top:172px;width:187px;height:22px"></div>
<div class="lbl b red" style="left:553px;top:210px;font-size:11px">Ship to</div>
<div class="tb" style="left:553px;top:224px;width:230px;height:22px"></div>
<div class="lbl" style="left:557px;top:228px;font-size:11px">Retailer Software Ltd</div>
<div class="tb" style="left:553px;top:246px;width:230px;height:22px"></div>
<div class="lbl" style="left:557px;top:250px;font-size:11px">7 Tavern Crescent</div>
<div class="tb" style="left:553px;top:268px;width:230px;height:22px"></div>
<div class="lbl" style="left:557px;top:272px;font-size:11px">Papine, Kingston 6</div>
<div class="lbl b" style="left:553px;top:293px;font-size:11px">Attention</div>
<div class="tb" style="left:608px;top:289px;width:175px;height:22px"></div>


<!-- ===== TABS / DETAILS ===== -->
<div class="a" style="left:25px;top:315px;width:789px;height:147px;background:linear-gradient(#FDFDFE 0%,#FAFAFC 50%,#F5F5F3 100%);border-left:1px solid #C8C8C0"></div>
<div class="a" style="left:25px;top:315px;width:288px;height:3px;border-radius:3px 3px 0 0;background:linear-gradient(#E6A63A,#F7BE45 50%,#FFD058)"></div>
<div class="lbl b" style="left:135px;top:326px;font-size:20px;line-height:22px;color:#0C1A6C">Details</div>
<div class="a" style="left:313px;top:317px;width:229px;height:44px;border:1px solid #919B9C;border-bottom:none;border-radius:3px 3px 0 0;background:linear-gradient(#FEFEFE,#F1F0EA 70%,#E8E6DC)"></div>
<div class="lbl" style="left:313px;top:332px;width:229px;text-align:center;font-size:11.5px">Notes</div>
<div class="a" style="left:545px;top:318px;width:268px;height:43px;border:1px solid #919B9C;border-bottom:none;border-radius:3px 3px 0 0;background:linear-gradient(#FEFEFE,#F1F0EA 70%,#E8E6DC)"></div>
<div class="lbl" style="left:545px;top:332px;width:268px;text-align:center;font-size:10.5px">Pre-Payments</div>
<div class="a" style="left:313px;top:360px;width:500px;height:1px;background:#919B9C"></div>

<div class="lbl b red" style="left:33px;top:363px;font-size:12px;text-decoration:underline">Item</div>
<div class="tb" style="left:32px;top:379px;width:112px;height:22px;background:#80CC99;border:1px solid #8FA8BC;box-shadow:inset 0 0 0 1px #fff"></div>
<div class="lbl b" style="left:165px;top:366px;font-size:11.5px">Supplier stock no.</div>
<div class="tb" style="left:165px;top:379px;width:100px;height:22px"></div>
<div class="a" style="left:35px;top:416px;width:129px;height:1px;background:#0C1A6C"></div>
<div class="lbl b red" style="left:290px;top:367px;width:58px;text-align:right;font-size:11.5px">Unit</div>
<div class="tb" style="left:290px;top:379px;width:59px;height:22px"></div>
<div class="lbl b red" style="left:370px;top:366px;width:76px;text-align:right;font-size:11.5px">Quantity</div>
<div class="tb" style="left:370px;top:379px;width:77px;height:22px"></div>
<div class="lbl" style="left:370px;top:383px;width:72px;text-align:right;font-size:11px">0.00</div>
<div class="lbl b" style="left:460px;top:367px;width:72px;text-align:right;font-size:11.5px">Unit cost</div>
<div class="tb" style="left:460px;top:379px;width:71px;height:22px"></div>
<div class="lbl" style="left:460px;top:383px;width:66px;text-align:right;font-size:11px">0.00</div>
<div class="lbl b" style="left:553px;top:366px;width:62px;text-align:right;font-size:11.5px">Tax %</div>
<div class="tb" style="left:553px;top:379px;width:62px;height:22px"></div>
<div class="lbl" style="left:553px;top:383px;width:57px;text-align:right;font-size:11px">0.000%</div>

<div class="a" style="left:136px;top:422px;width:204px;height:36px;border-radius:18px;background:#EBE8D7"></div>
<div class="a" style="left:149px;top:429px;width:113px;height:25px;border:1px solid #C9C7BA;border-radius:3px;background:#F5F4EA"></div>
<div class="lbl b" style="left:149px;top:434px;width:113px;text-align:center;font-size:11.2px;color:#8E8E8A">Save -new</div>
<div class="a" style="left:268px;top:429px;width:60px;height:25px;border:1px solid #003C74;border-radius:3px;background:linear-gradient(#FFFFFF,#F3F2EC 80%,#D6D0C5)"></div>
<div class="lbl b" style="left:268px;top:434px;width:60px;text-align:center;font-size:11.5px">Cancel</div>

<div class="a" style="left:627px;top:363px;width:180px;height:90px;border:1px solid #ACA899;background:#ECE9D8"></div>
<div class="lbl b" style="left:640px;top:370px;font-size:11.5px">subtotal</div>
<div class="lbl" style="left:700px;top:370px;width:85px;text-align:right;font-family:'Liberation Serif',serif;font-weight:bold;font-size:14px;color:#0A1E8C">0.00</div>
<div class="lbl b" style="left:640px;top:396px;font-size:11.5px">tax</div>
<div class="lbl" style="left:700px;top:396px;width:85px;text-align:right;font-family:'Liberation Serif',serif;font-weight:bold;font-size:14px;color:#0A1E8C">0.00</div>
<div class="a" style="left:700px;top:419px;width:92px;height:1px;background:#000"></div>
<div class="lbl b" style="left:640px;top:428px;font-size:11.5px">line total</div>
<div class="lbl" style="left:700px;top:428px;width:85px;text-align:right;font-family:'Liberation Serif',serif;font-weight:bold;font-size:14px;color:#0A1E8C">0.00</div>
<div class="a" style="left:700px;top:443px;width:92px;height:1px;background:#000"></div>
<div class="a" style="left:700px;top:445px;width:92px;height:1px;background:#000"></div>

<!-- ===== GRID ===== -->
<div class="a" style="left:24px;top:461px;width:790px;height:256px;background:#F0EFEA;border-left:2px solid #A0A0A0;border-right:2px solid #A0A0A0;border-bottom:2px solid #888479"></div>
<div class="a" style="left:26px;top:461px;width:787px;height:1px;background:#9DB0C8"></div>
<div class="a" style="left:26px;top:462px;width:767px;height:31px;background:#ECE9D8"></div>
<div class="a" style="left:26px;top:493px;width:767px;height:2px;background:#000"></div>
<div class="a" style="left:26px;top:495px;width:768px;height:195px;background:#fff"></div>
<div class="a" style="left:26px;top:690px;width:787px;height:1px;background:#9DB0C8"></div>
<div class="a" style="left:132px;top:465px;width:1px;height:24px;background:#C8C5B5"></div>
<div class="a" style="left:433px;top:465px;width:1px;height:24px;background:#C8C5B5"></div>
<div class="a" style="left:520px;top:465px;width:1px;height:24px;background:#C8C5B5"></div>
<div class="a" style="left:597px;top:465px;width:1px;height:24px;background:#C8C5B5"></div>
<div class="a" style="left:683px;top:465px;width:1px;height:24px;background:#C8C5B5"></div>
<div class="a" style="left:775px;top:465px;width:1px;height:24px;background:#C8C5B5"></div>
<div class="lbl" style="left:27px;top:471px;font-size:12.4px">Item number</div>
<div class="lbl" style="left:134px;top:471px;font-size:12.4px">Description</div>
<div class="lbl" style="left:434px;top:463px;width:87px;text-align:center;font-size:12.4px;line-height:15px">Supplier stock<br>no.</div>
<div class="lbl" style="left:520px;top:463px;width:79px;text-align:right;font-size:12.4px">Quantity</div>
<div class="lbl" style="left:598px;top:463px;width:87px;text-align:right;font-size:12.4px">Unit cost</div>
<div class="lbl" style="left:684px;top:471px;width:93px;text-align:right;font-size:12.4px">Ext. cost</div>

<div class="row" style="top:494px"><div class="cell" style="left:2px;font-size:12.4px">771</div><div class="cell" style="left:109px;font-size:12.4px">Beef -&nbsp; Cow Skin Local</div><div class="cell r" style="left:490px;width:80px;font-size:12.4px">1.000</div><div class="cell r" style="left:570px;width:86px;font-size:12.4px">150.00</div><div class="cell r" style="left:660px;width:88px;font-size:12.4px">150.00</div></div>
<div class="row" style="top:524px"><div class="cell" style="left:2px;font-size:12.4px">11</div><div class="cell" style="left:109px;font-size:12.4px">Fish - Silver Fryers W/G</div><div class="cell r" style="left:490px;width:80px;font-size:12.4px">1.000</div><div class="cell r" style="left:570px;width:86px;font-size:12.4px">181.81</div><div class="cell r" style="left:660px;width:88px;font-size:12.4px">181.81</div></div>
<div class="row" style="top:554px"><div class="cell" style="left:2px;font-size:12.4px">123</div><div class="cell" style="left:109px;font-size:12.4px">Chicken - BD Neck</div><div class="cell r" style="left:490px;width:80px;font-size:12.4px">1.000</div><div class="cell r" style="left:570px;width:86px;font-size:12.4px">21.59</div><div class="cell r" style="left:660px;width:88px;font-size:12.4px">21.59</div></div>
<div class="row" style="top:584px"><div class="cell" style="left:2px;font-size:12.4px">1234</div><div class="cell" style="left:109px;font-size:12.4px">Pork Smoked Pork Cutting (20lbs)</div><div class="cell r" style="left:490px;width:80px;font-size:12.4px">1.000</div><div class="cell r" style="left:570px;width:86px;font-size:12.4px">104.70</div><div class="cell r" style="left:660px;width:88px;font-size:12.4px">121.98</div></div>
<div class="a" style="left:27px;top:613px;width:766px;height:31px;background:#B8CCEA;border:1px solid #6A8CC4"></div>
<div class="row" style="top:614px"><div class="cell" style="left:109px;font-size:12.4px;letter-spacing:2.1px">*****</div><div class="cell" style="left:152px;font-size:12.4px;letter-spacing:3px">New Line</div><div class="cell" style="left:236px;font-size:12.4px;letter-spacing:2.1px">*****</div><div class="cell r" style="left:570px;width:86px;font-size:12.4px">0.00</div><div class="cell r" style="left:660px;width:88px;font-size:12.4px">0.00</div></div>

<!-- scrollbar -->
<div class="a" style="left:794px;top:462px;width:16px;height:228px;background:#FAFAFD"></div>
<div class="a" style="left:794px;top:463px;width:16px;height:15px;border:1px solid #B9CCF5;border-radius:2px;background:linear-gradient(90deg,#C9D8FC,#B4C8F6)"><svg class="a" style="left:3px;top:3px" width="9" height="7"><path d="M1 5.5L4.5 2L8 5.5" stroke="#4D6185" stroke-width="2" fill="none"/></svg></div>
<div class="a" style="left:794px;top:480px;width:15px;height:193px;border:1px solid #A7BEF2;border-radius:2px;background:linear-gradient(90deg,#C6D6FC,#B8CBF8 50%,#AFC4F5)"></div>
<div class="a" style="left:798px;top:572px;width:7px;height:1px;background:#8CA5DC;box-shadow:0 2px 0 #8CA5DC,0 4px 0 #8CA5DC,0 6px 0 #8CA5DC"></div>
<div class="a" style="left:794px;top:674px;width:16px;height:15px;border:1px solid #B9CCF5;border-radius:2px;background:linear-gradient(90deg,#C9D8FC,#B4C8F6)"><svg class="a" style="left:3px;top:4px" width="9" height="7"><path d="M1 1.5L4.5 5L8 1.5" stroke="#4D6185" stroke-width="2" fill="none"/></svg></div>


<!-- ===== RIGHT PANEL ===== -->
<div class="a" style="left:813px;top:108px;width:2px;height:609px;background:#A0A0A0"></div>
<div class="a" style="left:815px;top:108px;width:154px;height:74px;background:#000"></div>
<div class="lbl" style="left:815px;top:111px;width:150px;text-align:right;font-weight:bold;font-size:19px;line-height:24px;color:#22E622;-webkit-text-stroke:1.2px #22E622;letter-spacing:0.8px;transform:scaleX(1.2);transform-origin:right top">Add new<br>purchase<br>order</div>
<div class="a" style="left:817px;top:187px;width:150px;height:131px;border:2px solid #000;border-radius:11px;background:#B4B4B4"></div>
<div class="lbl b" style="left:821px;top:206px;font-size:11px;color:#fff">Sub-total</div>
<div class="lbl b" style="left:862px;top:201px;width:100px;text-align:right;font-size:12px;color:#fff">458.10</div>
<div class="lbl b" style="left:821px;top:228px;font-size:11px;color:#fff">Tax</div>
<div class="lbl b" style="left:862px;top:226px;width:100px;text-align:right;font-size:12px;color:#fff">17.28</div>
<div class="a" style="left:871px;top:265px;width:92px;height:1px;background:#fff"></div>
<div class="lbl b" style="left:821px;top:281px;font-size:11px;color:#fff">Total</div>
<div class="lbl b" style="left:862px;top:280px;width:100px;text-align:right;font-size:12px;color:#fff">475.38</div>
<div class="a" style="left:871px;top:300px;width:92px;height:1px;background:#fff"></div>
<div class="a" style="left:871px;top:302px;width:92px;height:1px;background:#fff"></div>

<div class="lbl b" style="left:820px;top:409px;width:154px;text-align:center;font-size:26.5px;line-height:30px">Action?</div>
<div class="abtn" style="top:437px;height:34px;background:#A2A2A2;border:2px solid #2A4A80;border-radius:4px"></div>
<div class="a" style="left:824px;top:440px;width:136px;height:28px;border:1px dotted #505A6A"></div>
<div class="lbl b" style="left:821px;top:447px;width:142px;text-align:center;font-size:11px;color:#fff">Save (F2)</div>
<div class="abtn" style="top:473px;height:24px;line-height:22px">Create new</div>
<div class="abtn" style="top:499px;height:24px;line-height:22px">Cancel (F3)</div>
<div class="abtn" style="top:525px;height:24px;line-height:22px">Void</div>
<div class="abtn" style="top:551px;height:24px;line-height:22px">Search (F5)</div>
<div class="abtn" style="top:577px;height:24px;line-height:22px">Re-print</div>
<div class="abtn" style="top:621px;height:36px;line-height:34px;font-weight:normal;font-size:10.8px">Copy THIS purchase order</div>
<div class="abtn" style="top:679px;height:36px;line-height:34px;font-size:11.5px">Close (F12)</div>

<!-- ===== ICON ===== -->
<svg class="a" style="left:0;top:0" width="1024" height="768">
 <defs>
  <linearGradient id="pp" x1="0" y1="0" x2="1" y2="1"><stop offset="0" stop-color="#E2F1FF"/><stop offset="1" stop-color="#A6CDF5"/></linearGradient>
  <linearGradient id="fg" x1="0" y1="0" x2="0.3" y2="1"><stop offset="0" stop-color="#8EE050"/><stop offset="1" stop-color="#3CB22A"/></linearGradient>
  <linearGradient id="sc" x1="0" y1="0" x2="0" y2="1"><stop offset="0" stop-color="#7CCBFA"/><stop offset="1" stop-color="#2C98E8"/></linearGradient>
 </defs>
 <!-- big clipboard -->
 <path d="M741.6 165.2 L770.2 157.4 L785 186.7 L753.8 195.3 Z" fill="#F5BC30" stroke="#D89318" stroke-width="1"/>
 <path d="M745.2 168.2 L768.3 161.8 L781.2 185.6 L755.6 192.2 Z" fill="url(#pp)" stroke="#5AA0E0" stroke-width="0.7"/>
 <path d="M749.8 163.5 L764 159.6 L765 162.5 L751.2 166.4 Z" fill="#F8C048" stroke="#E0A030" stroke-width="0.6"/>
 <path d="M751 163 L753 158 C754 155.5 757 155.5 757.6 158 L762 161 Z" fill="#F8C048" stroke="#E0A030" stroke-width="0.6"/>
 <path d="M769.5 176.5 L776 175 L775 180 L771 181 Z" fill="#8AC8F8" stroke="#4A98E0" stroke-width="0.6"/>
 <!-- small clipboard -->
 <rect x="785.5" y="165.5" width="25.5" height="27" rx="3" fill="#F5C838" stroke="#B88A18" stroke-width="1"/>
 <path d="M790.5 169 L806.5 168.5 L806.8 188.5 L791 189.5 Z" fill="#F2F6FF" stroke="#6A9AD8" stroke-width="0.6"/>
 <path d="M789.7 166.5 C790 164 804 163.6 804.5 166 L804.5 172.5 L790 173 Z" fill="#2E96E8"/>
 <path d="M792.5 170 C795 167.5 800 167.5 802.5 169.5" stroke="#E8F4FF" stroke-width="0.8" fill="none"/>
 <path d="M793 175.5 l1.3 1.5 l2.4-3 M793 180.8 l1.3 1.5 l2.4-3 M793 185.6 l1.3 1.5 l2.4-3" stroke="#D81818" stroke-width="1.3" fill="none"/>
 <path d="M797.8 176 h6.5 M797.8 181.2 h6.5 M797.8 186 h6.5" stroke="#4A7ACC" stroke-width="0.9"/>
 <!-- folder -->
 <path d="M753.8 183.6 L762 182 L811.2 194.5 L797.2 231.5 L789.7 229 Z" fill="url(#fg)"/>
 <path d="M762 182 L808 193.8 L797 228 L799 194.6 Z" fill="#F2F4EE"/>
 <path d="M808 193.8 L811.2 194.8 L797.2 231.5 L796.4 229 Z" fill="#4AAA30"/>
 <path d="M754.9 190 L798.9 194.6 L796.4 231.5 L770 222 Z" fill="url(#fg)"/>
 <!-- calculator -->
 <path d="M734.1 212 L768.2 205.4 L789.75 229 L754.9 241 Z" fill="#E8E8E8" stroke="#C8C8C8" stroke-width="0.8"/>
 <path d="M754.9 241 L789.75 229 L789.75 231.5 L755.3 243.5 Z" fill="#B8B8B8"/>
 <path d="M736.2 200 L767.8 193.7 L768.6 206.2 L737.5 212.8 Z" fill="#F5C030" stroke="#D89818" stroke-width="0.8"/>
 <path d="M741.2 201.8 L765 197.5 L765.3 206.5 L741.6 210.8 Z" fill="url(#sc)"/>
 <path d="M744 206 L762 202.5" stroke="#D8F0FF" stroke-width="1.2" stroke-dasharray="1 0.6"/>
 <ellipse cx="748.5" cy="216.5" rx="2.6" ry="1.8" fill="#F2BC28" stroke="#E0A018" stroke-width="0.4"/><ellipse cx="754.8" cy="214.7" rx="2.6" ry="1.8" fill="#F2BC28" stroke="#E0A018" stroke-width="0.4"/><ellipse cx="761.2" cy="212.8" rx="2.6" ry="1.8" fill="#F2BC28" stroke="#E0A018" stroke-width="0.4"/><ellipse cx="767.5" cy="211.0" rx="2.6" ry="1.8" fill="#F2BC28" stroke="#E0A018" stroke-width="0.4"/><ellipse cx="751.5" cy="221.2" rx="2.6" ry="1.8" fill="#F2BC28" stroke="#E0A018" stroke-width="0.4"/><ellipse cx="758.1" cy="219.3" rx="2.6" ry="1.8" fill="#F2BC28" stroke="#E0A018" stroke-width="0.4"/><ellipse cx="764.6" cy="217.4" rx="2.6" ry="1.8" fill="#F2BC28" stroke="#E0A018" stroke-width="0.4"/><ellipse cx="771.2" cy="215.5" rx="2.6" ry="1.8" fill="#F2BC28" stroke="#E0A018" stroke-width="0.4"/><ellipse cx="754.5" cy="225.8" rx="2.6" ry="1.8" fill="#F2BC28" stroke="#E0A018" stroke-width="0.4"/><ellipse cx="761.3" cy="223.9" rx="2.6" ry="1.8" fill="#F2BC28" stroke="#E0A018" stroke-width="0.4"/><ellipse cx="768.1" cy="221.9" rx="2.6" ry="1.8" fill="#F2BC28" stroke="#E0A018" stroke-width="0.4"/><ellipse cx="774.8" cy="220.0" rx="2.6" ry="1.8" fill="#F2BC28" stroke="#E0A018" stroke-width="0.4"/><ellipse cx="757.5" cy="230.5" rx="2.6" ry="1.8" fill="#F2BC28" stroke="#E0A018" stroke-width="0.4"/><ellipse cx="764.5" cy="228.5" rx="2.6" ry="1.8" fill="#F2BC28" stroke="#E0A018" stroke-width="0.4"/><ellipse cx="771.5" cy="226.5" rx="2.6" ry="1.8" fill="#F2BC28" stroke="#E0A018" stroke-width="0.4"/><ellipse cx="778.5" cy="224.5" rx="2.6" ry="1.8" fill="#F2BC28" stroke="#E0A018" stroke-width="0.4"/>
</svg>
<svg class="a" style="left:0;top:0" width="1024" height="768"><path d="M551.5 682.5 L551.5 698.5 L555.5 694.8 L558.3 700.3 L560.8 699.2 L558.3 693.8 L563 693.8 Z" fill="#fff" stroke="#000" stroke-width="1" stroke-linejoin="round"/></svg>
</body></html>
